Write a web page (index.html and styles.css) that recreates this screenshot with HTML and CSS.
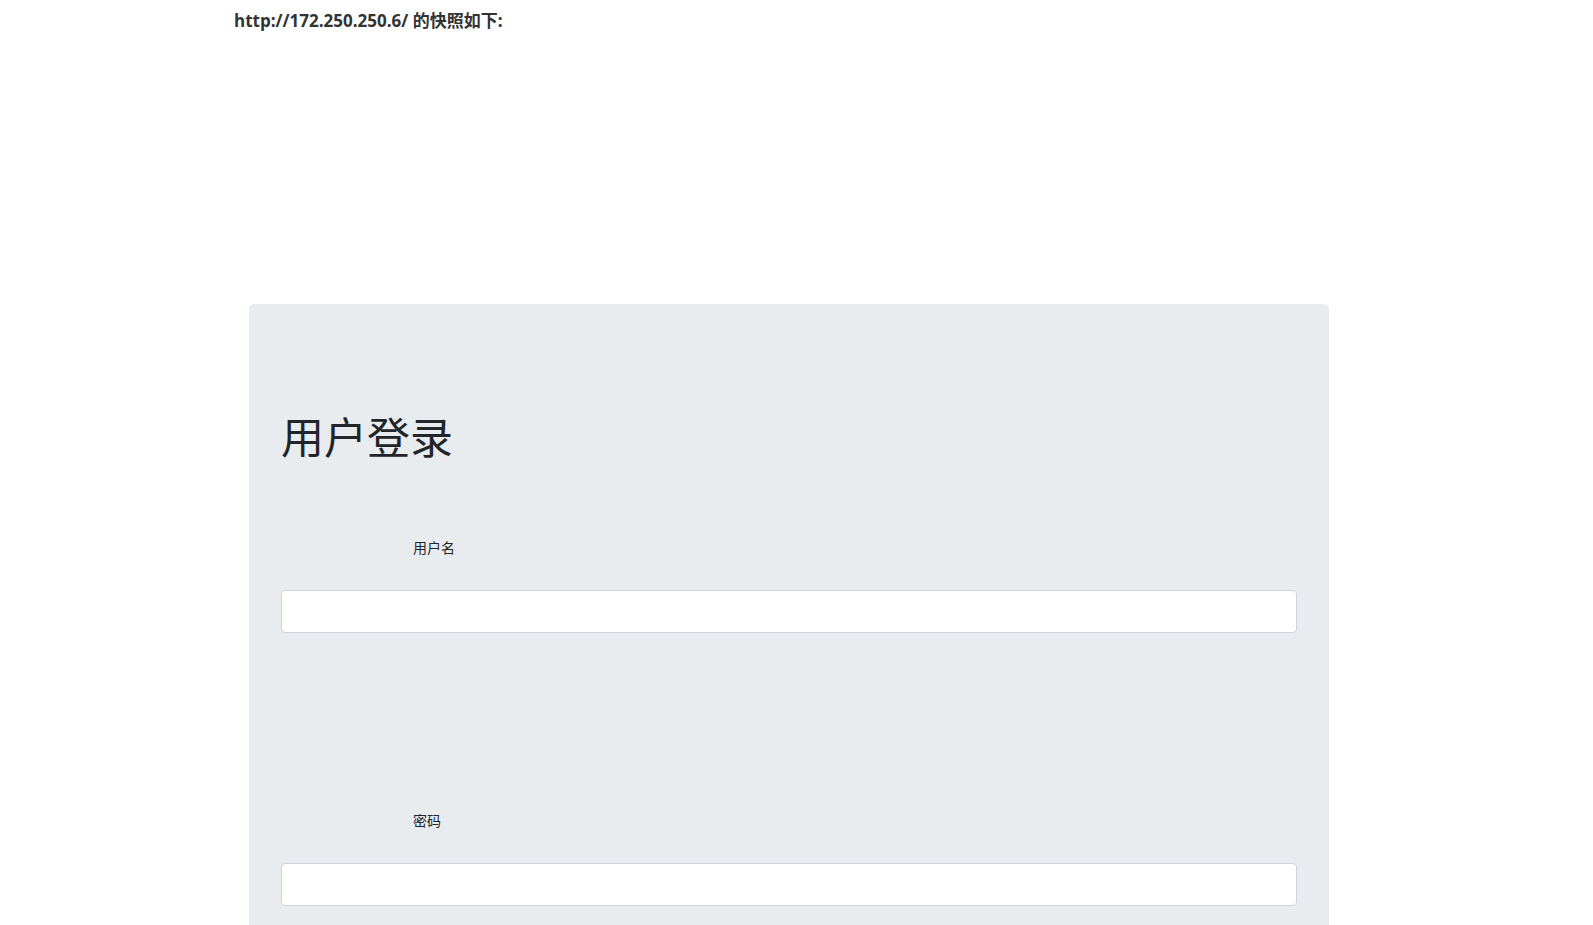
FILE: index.html
```html
<!DOCTYPE html>
<html lang="zh-CN">
<head>
    <meta charset="UTF-8">
    <meta name="viewport" content="width=device-width, initial-scale=1.0">
    <title>用户登录</title>
    <link rel="stylesheet" href="styles.css">
</head>
<body>

<div class="page">
    <div class="snapshot-head">http://172.250.250.6/ 的快照如下:</div>

    <div class="jumbotron">
        <h1>用户登录</h1>
        <form class="login-form">
            <div class="form-group">
                <label for="username">用户名</label>
                <input type="text" id="username">
            </div>
            <div class="form-group">
                <label for="password">密码</label>
                <input type="password" id="password">
            </div>
        </form>
    </div>
</div>

</body>
</html>
```

FILE: styles.css
```css
html, body {
    overflow: hidden;
}
body {
    margin: 0;
    background-color: #ffffff;
    font-family: "Noto Sans CJK SC", "Liberation Sans", sans-serif;
    color: #212529;
}
.page {
    width: 1125px;
    margin: 0 auto;
}
.snapshot-head {
    padding-top: 9px;
    font-size: 17px;
    line-height: 24px;
    font-weight: bold;
    color: #333333;
    font-family: "Open Sans", "Noto Sans CJK SC", sans-serif;
}
.jumbotron {
    margin: 271px 0 0 15px;
    width: 1080px;
    box-sizing: border-box;
    padding: 64px 32px;
    background-color: #e9ecef;
    border-radius: 5px;
}
h1 {
    margin: 42px 0 0;
    font-size: 43px;
    font-weight: normal;
    line-height: 1.2;
}
.login-form {
    margin-top: 75px;
}
.form-group {
    margin-bottom: 177px;
}
.form-group label {
    display: block;
    padding-left: 132px;
    margin-bottom: 32px;
    font-size: 14px;
    line-height: 21px;
}
.form-group input {
    display: block;
    width: 100%;
    box-sizing: border-box;
    height: 43px;
    padding: 6px 12px;
    border: 1px solid #ced4da;
    border-radius: 4px;
    background-color: #ffffff;
    font-size: 16px;
}
```
